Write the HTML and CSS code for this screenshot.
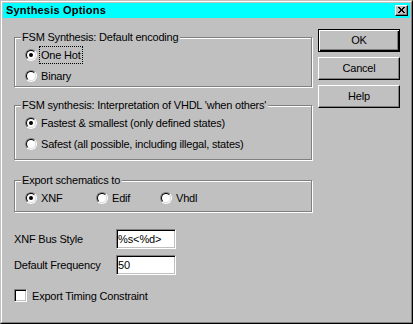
FILE: index.html
```html
<!DOCTYPE html>
<html>
<head>
<meta charset="utf-8">
<title>Synthesis Options</title>
<link rel="stylesheet" href="styles.css">
</head>
<body>
<div class="window">
  <div class="frame">
    <div class="titlebar">
      <span class="title">Synthesis Options</span>
      <span class="close">
        <svg width="7" height="6" viewBox="0 0 7 6" shape-rendering="crispEdges">
          <rect x="0" y="0" width="2" height="1"/><rect x="5" y="0" width="2" height="1"/>
          <rect x="1" y="1" width="2" height="1"/><rect x="4" y="1" width="2" height="1"/>
          <rect x="2" y="2" width="3" height="1"/>
          <rect x="2" y="3" width="3" height="1"/>
          <rect x="1" y="4" width="2" height="1"/><rect x="4" y="4" width="2" height="1"/>
          <rect x="0" y="5" width="2" height="1"/><rect x="5" y="5" width="2" height="1"/>
        </svg>
      </span>
    </div>
    <div class="body">
      <div class="left">
        <fieldset class="group g1">
          <legend>FSM Synthesis: Default encoding</legend>
          <div class="opt"><span class="radio on"></span><span class="lbl focus">One Hot</span></div>
          <div class="opt"><span class="radio"></span><span class="lbl">Binary</span></div>
        </fieldset>
        <fieldset class="group g2">
          <legend>FSM synthesis: Interpretation of VHDL 'when others'</legend>
          <div class="opt"><span class="radio on"></span><span class="lbl">Fastest &amp; smallest (only defined states)</span></div>
          <div class="opt"><span class="radio"></span><span class="lbl">Safest (all possible, including illegal, states)</span></div>
        </fieldset>
        <fieldset class="group g3">
          <legend>Export schematics to</legend>
          <div class="opts">
            <div class="opt"><span class="radio on"></span><span class="lbl">XNF</span></div>
            <div class="opt"><span class="radio"></span><span class="lbl">Edif</span></div>
            <div class="opt"><span class="radio"></span><span class="lbl">Vhdl</span></div>
          </div>
        </fieldset>
        <div class="field f1"><span class="flabel">XNF Bus Style</span><span class="input">%s&lt;%d&gt;</span></div>
        <div class="field f2"><span class="flabel">Default Frequency</span><span class="input">50</span></div>
        <div class="check"><span class="box"></span><span class="clbl">Export Timing Constraint</span></div>
      </div>
      <div class="buttons">
        <div class="btn default">OK</div>
        <div class="btn">Cancel</div>
        <div class="btn">Help</div>
      </div>
    </div>
  </div>
</div>
</body>
</html>
```
FILE: styles.css
```css
* { box-sizing: border-box; }

body {
  margin: 0;
  background: #c0c0c0;
  font-family: "Liberation Sans", Arial, sans-serif;
  font-size: 11px;
  letter-spacing: -0.2px;
  color: #000;
}

.window {
  width: 413px;
  height: 324px;
  border: 1px solid;
  border-color: #c0c0c0 #000 #000 #c0c0c0;
  background: #c0c0c0;
}

.frame {
  height: 100%;
  border: 1px solid;
  border-color: #fff #808080 #808080 #fff;
  padding: 1px;
}

.titlebar {
  height: 15px;
  background: #00ffff;
  display: flex;
  align-items: center;
  justify-content: space-between;
  padding: 0 2px 0 3px;
}

.title {
  font-weight: bold;
  letter-spacing: 0.2px;
  line-height: 13px;
}

.close {
  width: 13px;
  height: 11px;
  background: #c0c0c0;
  border: 1px solid;
  border-color: #fff #000 #000 #fff;
  box-shadow: inset -1px -1px #808080;
  display: flex;
  align-items: center;
  justify-content: center;
  padding: 0 1px 1px 0;
}

.close svg { display: block; fill: #000; }

.body {
  display: flex;
  padding-left: 11px;
}

.left {
  width: 298px;
  padding-top: 13px;
}

.group {
  margin: 0;
  padding: 0 0 0 6px;
  border: 1px solid #808080;
  box-shadow: inset 1px 1px #fff, 1px 1px #fff;
  min-width: 0;
}

.group legend {
  padding: 0 2px 0 1px;
  line-height: 13px;
  background: #c0c0c0;
}

.g1 { padding-bottom: 0; }
.g2 { margin-top: 12px; padding-bottom: 5px; }
.g3 { margin-top: 14px; padding-bottom: 3px; }

.opt {
  height: 21px;
  display: flex;
  align-items: center;
  padding-left: 4px;
}

.opts {
  display: grid;
  grid-template-columns: 71px 64px auto;
  align-items: center;
  height: 21px;
  padding-left: 4px;
}

.opts .opt { padding-left: 0; height: auto; }

.radio {
  position: relative;
  flex: none;
  width: 12px;
  height: 12px;
  border-radius: 50%;
  border: 1px solid;
  border-color: #808080 #fff #fff #808080;
  margin-right: 2px;
}

.radio::before {
  content: "";
  position: absolute;
  inset: 0;
  border-radius: 50%;
  border: 1px solid;
  border-color: #000 #dfdfdf #dfdfdf #000;
  background: #fff;
}

.radio.on::after {
  content: "";
  position: absolute;
  left: 3px;
  top: 3px;
  width: 4px;
  height: 4px;
  border-radius: 50%;
  background: #000;
}

.lbl {
  border: 1px solid transparent;
  padding: 1px 1px;
  line-height: 14px;
}

.lbl.focus { border: 1px dotted #000; }

.field {
  display: flex;
  align-items: center;
  height: 20px;
}

.f1 { margin-top: 17px; }
.f2 { margin-top: 6px; }

.flabel { width: 102px; }

.input {
  width: 60px;
  height: 20px;
  background: #fff;
  border: 1px solid;
  border-color: #808080 #fff #fff #808080;
  box-shadow: inset 1px 1px #000, inset -1px -1px #c0c0c0;
  padding: 1px 0 0 1px;
  line-height: 16px;
  letter-spacing: -0.1px;
}

.check {
  display: flex;
  align-items: center;
  margin-top: 14px;
  height: 13px;
}

.box {
  width: 13px;
  height: 13px;
  background: #fff;
  border: 1px solid;
  border-color: #808080 #fff #fff #808080;
  box-shadow: inset 1px 1px #000, inset -1px -1px #c0c0c0;
}

.clbl { margin-left: 5px; }

.buttons {
  margin-left: 6px;
  width: 82px;
  padding-top: 11px;
  display: flex;
  flex-direction: column;
  gap: 5px;
}

.btn {
  height: 23px;
  display: flex;
  align-items: center;
  justify-content: center;
  border: 1px solid;
  border-color: #fff #000 #000 #fff;
  box-shadow: inset -1px -1px #808080;
  padding-bottom: 1px;
}

.btn.default {
  border-color: #000;
  box-shadow: inset 1px 1px #fff, inset -1px -1px #000, inset -2px -2px #808080;
}
```
